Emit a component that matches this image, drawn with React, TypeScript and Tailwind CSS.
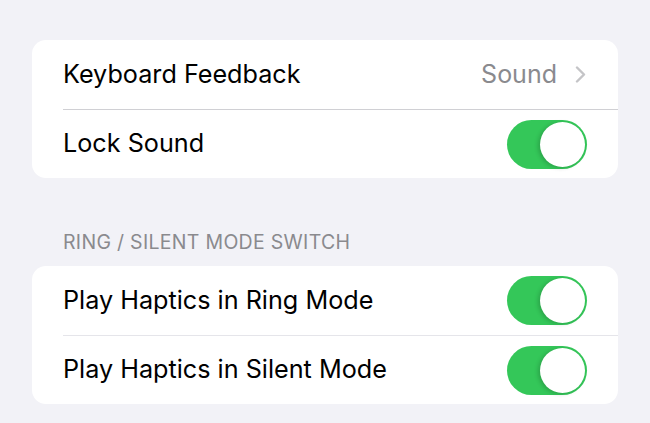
import type { ReactNode } from "react";

function Toggle() {
  return (
    <div className="flex h-[49px] w-[80px] items-center justify-end rounded-full bg-[#34c759] p-[2px]">
      <div className="h-[45px] w-[45px] rounded-full bg-white shadow-[-2px_1px_4px_rgba(0,0,0,0.18)]" />
    </div>
  );
}

function Row({ label, divider, children }: { label: string; divider?: string; children: ReactNode }) {
  return (
    <div className="pl-[31px]">
      <div className={`flex h-[69px] items-center justify-between pr-[31px] ${divider ?? ""}`}>
        <span className="text-[25.2px] leading-none text-black">{label}</span>
        {children}
      </div>
    </div>
  );
}

export default function App() {
  return (
    <div
      className="h-[423px] w-[650px] overflow-hidden bg-[#f2f2f7] px-[32px] pt-[40px]"
      style={{ fontFamily: "Inter, 'Liberation Sans', sans-serif" }}
    >
      <div className="rounded-[14px] bg-white">
        <Row label="Keyboard Feedback">
          <div className="flex items-center gap-[18px]">
            <span className="text-[25px] leading-none text-[#8a8a8e]">Sound</span>
            <svg width="11" height="17" viewBox="0 0 11 17" fill="none" className="mr-[1px]">
              <path d="M2 1.5 L9 8.5 L2 15.5" stroke="#c4c4c7" strokeWidth="2.4" strokeLinecap="round" strokeLinejoin="round" />
            </svg>
          </div>
        </Row>
        <Row label="Lock Sound" divider="border-t border-[#d0d0d4]">
          <Toggle />
        </Row>
      </div>

      <div className="flex h-[88px] items-end pb-[14px] pl-[31px]">
        <span className="text-[19.5px] leading-none tracking-[0.3px] text-[#8a8a8e]">RING / SILENT MODE SWITCH</span>
      </div>

      <div className="rounded-[14px] bg-white">
        <Row label="Play Haptics in Ring Mode">
          <Toggle />
        </Row>
        <Row label="Play Haptics in Silent Mode" divider="border-t border-[#e5e5ea]">
          <Toggle />
        </Row>
      </div>
    </div>
  );
}
